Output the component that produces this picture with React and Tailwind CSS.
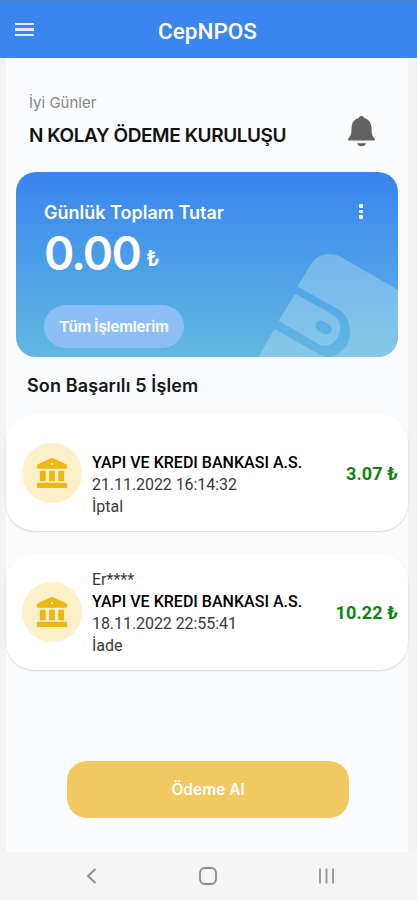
import { useState } from "react";

const transactions = [
  {
    id: 1,
    customer: "",
    bank: "YAPI VE KREDI BANKASI A.S.",
    date: "21.11.2022 16:14:32",
    status: "İptal",
    amount: "3.07 ₺",
  },
  {
    id: 2,
    customer: "Er****",
    bank: "YAPI VE KREDI BANKASI A.S.",
    date: "18.11.2022 22:55:41",
    status: "İade",
    amount: "10.22 ₺",
  },
];

function BankIcon() {
  return (
    <svg width="30" height="30" viewBox="0 0 30 30" fill="#ecb613">
      <path
        fillRule="evenodd"
        d="M14 .3a2.200 2.200 0 0 1 2 0l13 5.900a1.500 1.500 0 0 1 1 1.300v2a1.300 1.300 0 0 1-1.300 1.300H1.300A1.300 1.300 0 0 1 0 9.500v-2a1.500 1.500 0 0 1 1-1.300zM15 4.700a1.200 1.200 0 1 0 0 2.400 1.200 1.200 0 0 0 0-2.400z"
      />
      <rect x="2.900" y="12.800" width="5.800" height="10.400" rx=".6" />
      <rect x="12.100" y="12.800" width="5.800" height="10.400" rx=".6" />
      <rect x="21.300" y="12.800" width="5.800" height="10.400" rx=".6" />
      <rect x="0" y="24.800" width="30" height="5.200" rx="1.300" />
    </svg>
  );
}

function BellIcon() {
  return (
    <svg width="27" height="31" viewBox="0 0 27 31" fill="#626262">
      <path d="M13.500 0c1.500 0 2.500.9 2.700 2 4.500 1.200 7 4.600 7.200 9.300.2 5.500.4 8.300 3 11 .8.900.5 2.300-.8 2.300H1.400C.1 24.600-.2 23.200.6 22.300c2.600-2.700 2.800-5.500 3-11 .2-4.700 2.700-8.100 7.200-9.300C11 .9 12 0 13.500 0z" />
      <path d="M9 27.300h9c-.5 2-2.200 3-4.500 3s-4-1-4.500-3z" />
    </svg>
  );
}

function WalletShape() {
  return (
    <svg
      className="absolute inset-0"
      width="382"
      height="185"
      viewBox="0 0 382 185"
      fill="#bfe3f4"
      fillOpacity="0.38"
    >
      <path d="M281.500 114.500 294 93.500c7.500-11.500 19-14.500 31-8.500L382 118v67h-71c15-1 23-12 23-25 0-10-4-18-11.500-22.500z" />
      <path
        fillRule="evenodd"
        d="M278.300 123q.8-1.200 2.200-.5L314 141c8 4.500 11 10 10.300 16-1 11-11 20.500-21.600 15.300L262.700 148.700zM300.500 150.500c-2 2.500-1.200 6.500 2 8.500l4.500 2.500c3.200 1.700 6.500 1 8-1.500s.6-6-2.500-8l-4.500-2.600c-3-1.600-6-1.200-7.500 1.100z"
      />
      <path d="M257.500 158q1-1 2.500-.3L302.700 182q4 2.400 8.300 3H242.500z" />
    </svg>
  );
}

function TransactionRow({ item }) {
  return (
    <div className="flex items-center h-[117px] rounded-[28px] bg-white pl-[15.5px] pr-[10px] shadow-[0_1px_2px_rgba(0,0,0,0.16)]">
      <div className="flex items-center justify-center w-[60px] h-[60px] shrink-0 rounded-full bg-[#fdf0c9]">
        <BankIcon />
      </div>
      <div className="ml-[10.5px] mt-[3px] flex-1 whitespace-nowrap text-[16px] leading-[22px] text-[#3a3a3a]">
        <div className="h-[22px]">{item.customer}</div>
        <div className="font-medium text-[16px] tracking-[0.01px] text-black">{item.bank}</div>
        <div className="tracking-[-0.06px]">{item.date}</div>
        <div>{item.status}</div>
      </div>
      <div className="mt-px whitespace-nowrap text-[18px] tracking-[0.12px] font-bold text-[#128012]">
        {item.amount}
      </div>
    </div>
  );
}

export default function App() {
  const [items] = useState(transactions);

  return (
    <div className="flex flex-col w-[417px] h-[900px] overflow-hidden bg-[#f2f2f2] font-['Roboto',sans-serif]">
      <header className="grid grid-cols-[1fr_auto_1fr] items-center h-[58px] shrink-0 border-t border-[#5283c4] bg-[#3b86ee] pl-[15px] pr-[17px] pt-[4px] text-white">
        <button className="flex flex-col gap-[3px] w-[19px] -mt-[4px]">
          <span className="h-[2.5px] w-full bg-[#dceaff]" />
          <span className="h-[2.5px] w-full bg-[#dceaff]" />
          <span className="h-[2.5px] w-full bg-[#dceaff]" />
        </button>
        <h1 className="text-[22.5px] font-medium">CepNPOS</h1>
      </header>

      <main className="flex flex-col flex-1 ml-[6px] mr-[9px] bg-[#fafcfe]">
        <div className="flex justify-between h-[114px] pl-[23px] pr-[33px] pt-[34px] font-['Inter',sans-serif]">
          <div className="whitespace-nowrap">
            <div className="text-[15px] leading-[22px] text-[#858585]">İyi Günler</div>
            <div className="mt-[10px] text-[19px] leading-[24px] tracking-[-0.42px] font-semibold text-[#111]">
              N KOLAY ÖDEME KURULUŞU
            </div>
          </div>
          <div className="mt-[24px]">
            <BellIcon />
          </div>
        </div>

        <section className="relative h-[185px] w-[382px] ml-[10px] shrink-0 overflow-hidden rounded-[20px] bg-linear-to-b from-[#3984ef] to-[#62b8e0] font-['Inter',sans-serif] text-white">
          <WalletShape />
          <div className="relative flex flex-col items-start pl-[28px] pt-[29px]">
            <div className="flex justify-between w-full pr-[35px]">
              <h2 className="whitespace-nowrap text-[18px] leading-[24px] font-semibold">
                Günlük Toplam Tutar
              </h2>
              <div className="flex flex-col gap-[2px] pt-[3px]">
                <span className="w-[4px] h-[3.5px] rounded-[1px] bg-white" />
                <span className="w-[4px] h-[3.5px] rounded-[1px] bg-white" />
                <span className="w-[4px] h-[3.5px] rounded-[1px] bg-white" />
              </div>
            </div>
            <div className="flex items-baseline h-[60px] mt-[-2px] leading-[60px] font-semibold">
              <span className="text-[46px] tracking-[-1.8px]">0.00</span>
              <span className="ml-[6px] pb-[4px] -translate-y-[4px] text-[22px]">₺</span>
            </div>
            <button className="mt-[22px] h-[43px] w-[140px] rounded-full bg-[#8dbdf5] pt-[2px] text-[15px] tracking-[-0.2px] font-bold whitespace-nowrap text-[#f5faff]">
              Tüm İşlemlerim
            </button>
          </div>
        </section>

        <h3 className="mt-[17px] ml-[21px] text-[18px] leading-[24px] tracking-[0.12px] font-semibold text-[#171717] whitespace-nowrap font-['Inter',sans-serif]">
          Son Başarılı 5 İşlem
        </h3>

        <div className="flex flex-col gap-[22px] mt-[16px]">
          {items.map((item) => (
            <TransactionRow key={item.id} item={item} />
          ))}
        </div>

        <button className="mt-[91px] ml-[61px] h-[57px] w-[282px] rounded-[20px] bg-[#f2c961] text-[15.5px] font-semibold text-white font-['Inter',sans-serif]">
          Ödeme Al
        </button>
      </main>

      <nav className="flex items-center h-[48px] shrink-0 bg-[#f5f5f5] pl-[85px] pr-[81px] pb-px justify-between">
        <svg width="13" height="18" viewBox="0 0 13 18" fill="none" stroke="#8a8a8a" strokeWidth="1.800">
          <path d="M10.500 2 3 9l7.500 7" />
        </svg>
        <svg width="18" height="18" viewBox="0 0 18 18" fill="none" stroke="#8a8a8a" strokeWidth="1.800">
          <rect x="1" y="1" width="16" height="16" rx="5" />
        </svg>
        <svg width="18" height="18" viewBox="0 0 18 18" fill="none" stroke="#929292" strokeWidth="1.800">
          <path d="M2 1.500v15M8.500 1.500v15M15 1.500v15" />
        </svg>
      </nav>
    </div>
  );
}
